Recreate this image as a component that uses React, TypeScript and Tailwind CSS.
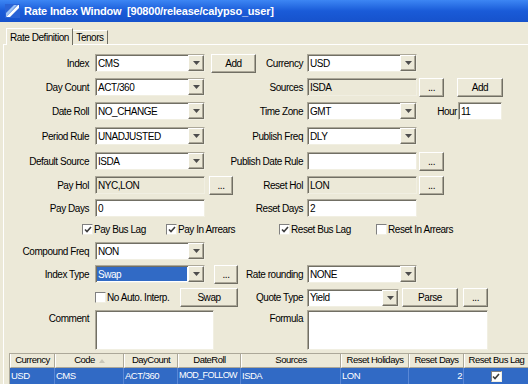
import React from 'react';

// XP-style bevels
const sunken =
  'border border-t-[#aca899] border-l-[#aca899] border-b-[#f1efe2] border-r-[#f1efe2] shadow-[inset_1px_1px_0_#716f64]';
const raised =
  'border border-t-white border-l-white border-b-[#716f64] border-r-[#716f64] shadow-[inset_-1px_-1px_0_#aca899]';

const Arrow = () => (
  <svg width="7" height="4" viewBox="0 0 7 4">
    <path d="M0 0h7L3.5 4z" fill="#4d4d4d" />
  </svg>
);

const Combo = ({ value, w, selected }: { value: string; w: string; selected?: boolean }) => (
  <div className={`${sunken} ${w} h-[18px] bg-white flex items-stretch shrink-0`}>
    <div className="flex-1 flex items-stretch p-[1px]">
      <span
        className={`flex items-center w-full px-[1px] ${selected ? 'bg-[#316ac5] text-white' : ''}`}
      >
        {value}
      </span>
    </div>
    <div className={`${raised} w-[16px] bg-[#ece9d8] flex items-center justify-center`}>
      <Arrow />
    </div>
  </div>
);

const Field = ({ value, w, grey }: { value?: string; w: string; grey?: boolean }) => (
  <div
    className={`${sunken} ${w} h-[18px] shrink-0 flex items-center px-[2px] ${grey ? 'bg-[#ece9d8]' : 'bg-white'}`}
  >
    {value}
  </div>
);

const Btn = ({ label, w, h = 'h-[19px]' }: { label: string; w: string; h?: string }) => (
  <div className={`${raised} ${w} ${h} shrink-0 bg-[#ece9d8] flex items-center justify-center`}>
    {label}
  </div>
);

const Box = ({ checked }: { checked?: boolean }) => (
  <div className="w-[11px] h-[11px] shrink-0 bg-white border border-t-[#808080] border-l-[#808080] border-b-[#f1efe2] border-r-[#f1efe2] flex items-center justify-center">
    {checked && (
      <svg width="8" height="7" viewBox="0 0 8 7">
        <path d="M1 3.5 L3 5.5 L7 1" stroke="#3c3c3c" strokeWidth="1.6" fill="none" />
      </svg>
    )}
  </div>
);

const Check = ({ label, checked, w }: { label: string; checked?: boolean; w: string }) => (
  <div className={`${w} shrink-0 flex items-center gap-[1px] whitespace-nowrap`}>
    <Box checked={checked} />
    <span>{label}</span>
  </div>
);

const LLabel = ({ children }: { children?: React.ReactNode }) => (
  <div className="w-[85px] mr-[6px] shrink-0 flex justify-end whitespace-nowrap">{children}</div>
);
const RLabel = ({ children }: { children?: React.ReactNode }) => (
  <div className="w-[65px] mr-[4px] shrink-0 flex justify-end whitespace-nowrap">{children}</div>
);

const Row = ({
  mt,
  left,
  right,
  h = 'h-[18px]',
}: {
  mt: string;
  left: React.ReactNode;
  right?: React.ReactNode;
  h?: string;
}) => (
  <div className={`flex items-center ${mt} ${h}`}>
    <div className="w-[234px] shrink-0 flex items-center">{left}</div>
    <div className="flex items-center">{right}</div>
  </div>
);

const columns = [
  { name: 'Currency', w: 'w-[45px]', v: 'USD' },
  { name: 'Code', w: 'w-[69px]', v: 'CMS', sort: true },
  { name: 'DayCount', w: 'w-[54px]', v: 'ACT/360' },
  { name: 'DateRoll', w: 'w-[63px]', v: 'MOD_FOLLOW' },
  { name: 'Sources', w: 'w-[100px]', v: 'ISDA' },
  { name: 'Reset Holidays', w: 'w-[68px]', v: 'LON' },
  { name: 'Reset Days', w: 'w-[55px]', v: '2', right: true },
  { name: 'Reset Bus Lag', w: 'w-[65px]', v: '', check: true },
];

export default function App() {
  return (
    <div className="w-[528px] h-[384px] bg-[#ece9d8] overflow-hidden text-black text-[10px] tracking-[-0.45px] font-[family-name:'Liberation_Sans',Arial,sans-serif]">
      {/* Title bar */}
      <div className="h-[22px] flex items-center bg-linear-to-b from-[#3d86f4] via-[#1a5bd8] to-[#1652cc] pl-[5px]">
        <svg width="15" height="14" viewBox="0 0 15 14">
          <rect x="0" y="0" width="15" height="14" fill="#2a63d6" />
          <polygon points="1,13 13,1 14,1 14,4 5,13" fill="#ffffff" />
          <polygon points="1,13 1,9 9,1 12,1" fill="#9fc4f5" />
        </svg>
        <span className="ml-[4px] text-white font-bold text-[11px] tracking-[-0.2px] whitespace-pre">
          Rate Index Window  [90800/release/calypso_user]
        </span>
      </div>

      {/* Tabs */}
      <div className="h-[22px] flex items-end pl-[6px]">
        <div className="relative z-10 -mb-px h-[17px] w-[67px] bg-[#ece9d8] border-t border-l border-r border-t-white border-l-white border-r-[#716f64] flex items-center justify-center">
          Rate Definition
        </div>
        <div className="h-[14px] w-[35px] border-t border-r border-t-white border-r-[#716f64] flex items-center justify-center">
          Tenors
        </div>
      </div>

      {/* Panel */}
      <div className="ml-[3px] border-l border-t border-l-white border-t-white flex flex-col">
        <Row
          mt="mt-[9px]"
          left={
            <>
              <LLabel>Index</LLabel>
              <Combo value="CMS" w="w-[110px]" />
              <div className="ml-[6px]">
                <Btn label="Add" w="w-[45px]" />
              </div>
            </>
          }
          right={
            <>
              <RLabel>Currency</RLabel>
              <Combo value="USD" w="w-[110px]" />
            </>
          }
        />
        <Row
          mt="mt-[6px]"
          left={
            <>
              <LLabel>Day Count</LLabel>
              <Combo value="ACT/360" w="w-[110px]" />
            </>
          }
          right={
            <>
              <RLabel>Sources</RLabel>
              <Field value="ISDA" w="w-[110px]" grey />
              <div className="ml-[2px]">
                <Btn label="..." w="w-[25px]" />
              </div>
              <div className="ml-[13px]">
                <Btn label="Add" w="w-[46px]" />
              </div>
            </>
          }
        />
        <Row
          mt="mt-[6px]"
          left={
            <>
              <LLabel>Date Roll</LLabel>
              <Combo value="NO_CHANGE" w="w-[110px]" />
            </>
          }
          right={
            <>
              <RLabel>Time Zone</RLabel>
              <Combo value="GMT" w="w-[110px]" />
              <div className="w-[40px] flex justify-end mr-[1px]">Hour</div>
              <Field value="11" w="w-[44px]" />
            </>
          }
        />
        <Row
          mt="mt-[7px]"
          left={
            <>
              <LLabel>Period Rule</LLabel>
              <Combo value="UNADJUSTED" w="w-[110px]" />
            </>
          }
          right={
            <>
              <RLabel>Publish Freq</RLabel>
              <Combo value="DLY" w="w-[110px]" />
            </>
          }
        />
        <Row
          mt="mt-[7px]"
          left={
            <>
              <LLabel>Default Source</LLabel>
              <Combo value="ISDA" w="w-[110px]" />
            </>
          }
          right={
            <>
              <RLabel>Publish Date Rule</RLabel>
              <Field w="w-[110px]" />
              <div className="ml-[2px]">
                <Btn label="..." w="w-[25px]" />
              </div>
            </>
          }
        />
        <Row
          mt="mt-[6px]"
          left={
            <>
              <LLabel>Pay Hol</LLabel>
              <Field value="NYC,LON" w="w-[110px]" grey />
              <div className="ml-[4px]">
                <Btn label="..." w="w-[24px]" />
              </div>
            </>
          }
          right={
            <>
              <RLabel>Reset Hol</RLabel>
              <Field value="LON" w="w-[110px]" grey />
              <div className="ml-[2px]">
                <Btn label="..." w="w-[25px]" />
              </div>
            </>
          }
        />
        <Row
          mt="mt-[5px]"
          left={
            <>
              <LLabel>Pay Days</LLabel>
              <Field value="0" w="w-[110px]" />
            </>
          }
          right={
            <>
              <RLabel>Reset Days</RLabel>
              <Field value="2" w="w-[110px]" />
            </>
          }
        />
        {/* checkbox row */}
        <div className="mt-[5px] h-[14px] flex items-center pl-[78px]">
          <Check label="Pay Bus Lag" checked w="w-[84px]" />
          <Check label="Pay In Arrears" checked w="w-[113px]" />
          <Check label="Reset Bus Lag" checked w="w-[97px]" />
          <Check label="Reset In Arrears" w="w-[90px]" />
        </div>
        <Row
          mt="mt-[6px]"
          left={
            <>
              <LLabel>Compound Freq</LLabel>
              <Combo value="NON" w="w-[110px]" />
            </>
          }
        />
        <Row
          mt="mt-[5px]"
          left={
            <>
              <LLabel>Index Type</LLabel>
              <Combo value="Swap" w="w-[110px]" selected />
              <div className="ml-[9px]">
                <Btn label="..." w="w-[24px]" />
              </div>
            </>
          }
          right={
            <>
              <RLabel>Rate rounding</RLabel>
              <Combo value="NONE" w="w-[110px]" />
            </>
          }
        />
        <Row
          mt="mt-[5px]"
          h="h-[19px]"
          left={
            <>
              <LLabel />
              <Check label="No Auto. Interp." w="w-[85px]" />
              <Btn label="Swap" w="w-[58px]" />
            </>
          }
          right={
            <>
              <RLabel>Quote Type</RLabel>
              <Combo value="Yield" w="w-[92px]" />
              <div className="ml-[3px]">
                <Btn label="Parse" w="w-[56px]" />
              </div>
              <div className="ml-[5px]">
                <Btn label="..." w="w-[25px]" />
              </div>
            </>
          }
        />
        {/* Comment / Formula */}
        <div className="mt-[3px] h-[40px] flex items-start">
          <div className="w-[234px] shrink-0 flex items-start">
            <div className="w-[85px] mr-[6px] shrink-0 flex justify-end pt-[1px]">Comment</div>
            <div className={`${sunken} w-[119px] h-[40px] bg-white`} />
          </div>
          <div className="flex items-start">
            <div className="w-[65px] mr-[4px] shrink-0 flex justify-end pt-[1px]">Formula</div>
            <div className={`${sunken} w-[181px] h-[40px] bg-white`} />
          </div>
        </div>

        {/* Table */}
        <div className="mt-[3px] ml-[5px] border-l border-[#aca899] flex flex-col text-[9.5px] tracking-[-0.5px]">
          <div className="flex h-[15px] border-t border-t-[#aca899]">
            {columns.map((c) => (
              <div
                key={c.name}
                className={`${c.w} shrink-0 overflow-hidden bg-[#ece9d8] border-l border-l-white border-r border-r-[#aca899] border-b border-b-[#aca899] flex items-center justify-center whitespace-nowrap`}
              >
                {c.name}
                {c.sort && (
                  <svg width="6" height="4" viewBox="0 0 6 4" className="ml-[4px]">
                    <path d="M0 4h6L3 0z" fill="#c9c6b8" />
                  </svg>
                )}
              </div>
            ))}
          </div>
          <div className="flex h-[16px] bg-[#316ac5] text-white">
            {columns.map((c) => (
              <div
                key={c.name}
                className={`${c.w} shrink-0 overflow-hidden px-[1px] border-r border-r-[#5a88d6] flex items-center whitespace-nowrap ${
                  c.right ? 'justify-end' : c.check ? 'justify-center' : ''
                } ${c.v === 'MOD_FOLLOW' ? 'text-[9px] tracking-[-0.6px]' : ''}`}
              >
                {c.check ? <Box checked /> : c.v}
              </div>
            ))}
          </div>
        </div>
      </div>
    </div>
  );
}
